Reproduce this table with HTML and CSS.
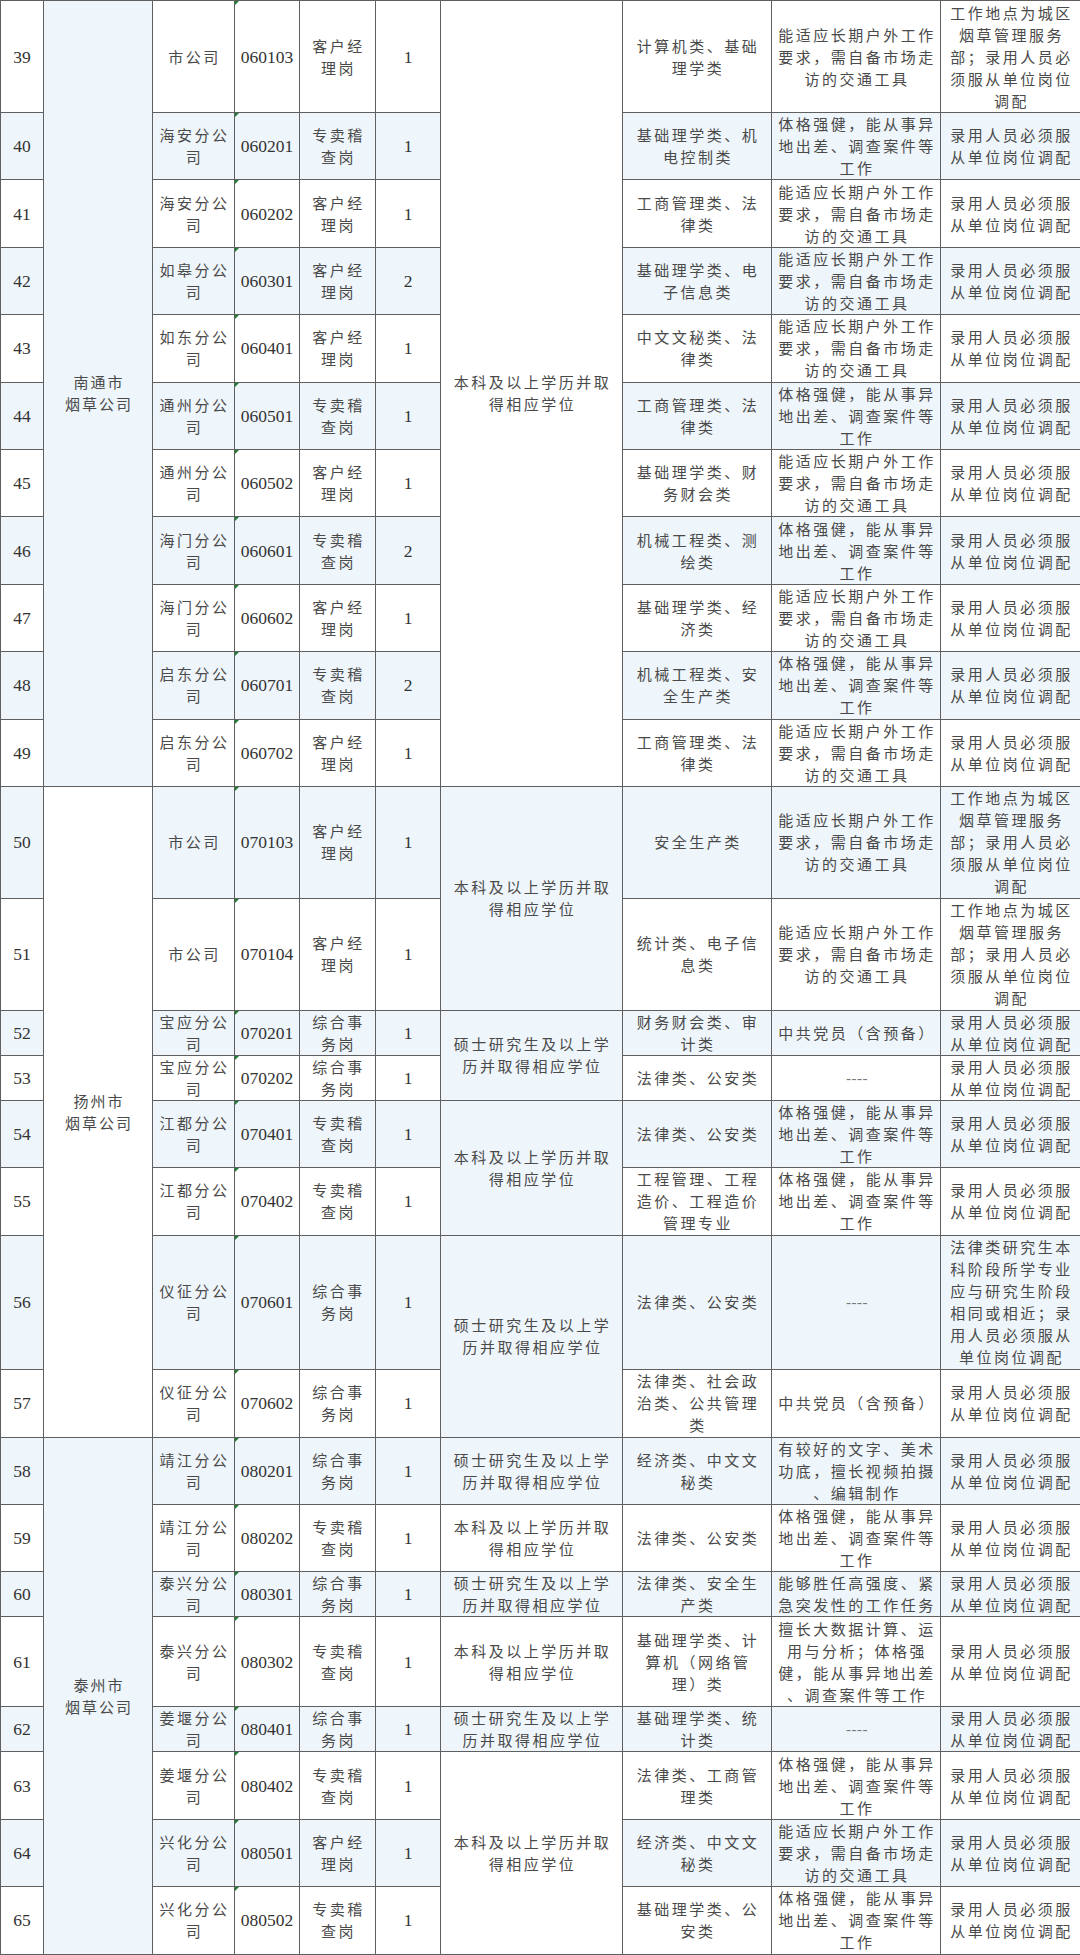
FILE: index.html
```html
<!DOCTYPE html>
<html lang="zh-CN">
<head>
<meta charset="utf-8">
<title>招聘岗位表</title>
<link rel="stylesheet" href="styles.css">
</head>
<body>
<table class="sheet">
  <colgroup>
    <col class="c-no"><col class="c-unit"><col class="c-dept"><col class="c-code"><col class="c-post">
    <col class="c-count"><col class="c-edu"><col class="c-major"><col class="c-req"><col class="c-note">
  </colgroup>
  <tbody>
    <tr class="h5">
      <td class="num">39</td>
      <td class="unit bg-blue" rowspan="11">南通市<br>烟草公司</td>
      <td>市公司</td><td class="num code">060103</td><td>客户经<br>理岗</td><td class="num">1</td>
      <td class="bg-white" rowspan="11">本科及以上学历并取<br>得相应学位</td>
      <td>计算机类、基础<br>理学类</td>
      <td>能适应长期户外工作<br>要求，需自备市场走<br>访的交通工具</td>
      <td>工作地点为城区<br>烟草管理服务<br>部；录用人员必<br>须服从单位岗位<br>调配</td>
    </tr>
    <tr class="h3 blue">
      <td class="num">40</td><td>海安分公<br>司</td><td class="num code">060201</td><td>专卖稽<br>查岗</td><td class="num">1</td>
      <td>基础理学类、机<br>电控制类</td>
      <td>体格强健，能从事异<br>地出差、调查案件等<br>工作</td>
      <td>录用人员必须服<br>从单位岗位调配</td>
    </tr>
    <tr class="h3">
      <td class="num">41</td><td>海安分公<br>司</td><td class="num code">060202</td><td>客户经<br>理岗</td><td class="num">1</td>
      <td>工商管理类、法<br>律类</td>
      <td>能适应长期户外工作<br>要求，需自备市场走<br>访的交通工具</td>
      <td>录用人员必须服<br>从单位岗位调配</td>
    </tr>
    <tr class="h3 blue">
      <td class="num">42</td><td>如皋分公<br>司</td><td class="num code">060301</td><td>客户经<br>理岗</td><td class="num">2</td>
      <td>基础理学类、电<br>子信息类</td>
      <td>能适应长期户外工作<br>要求，需自备市场走<br>访的交通工具</td>
      <td>录用人员必须服<br>从单位岗位调配</td>
    </tr>
    <tr class="h3">
      <td class="num">43</td><td>如东分公<br>司</td><td class="num code">060401</td><td>客户经<br>理岗</td><td class="num">1</td>
      <td>中文文秘类、法<br>律类</td>
      <td>能适应长期户外工作<br>要求，需自备市场走<br>访的交通工具</td>
      <td>录用人员必须服<br>从单位岗位调配</td>
    </tr>
    <tr class="h3 blue">
      <td class="num">44</td><td>通州分公<br>司</td><td class="num code">060501</td><td>专卖稽<br>查岗</td><td class="num">1</td>
      <td>工商管理类、法<br>律类</td>
      <td>体格强健，能从事异<br>地出差、调查案件等<br>工作</td>
      <td>录用人员必须服<br>从单位岗位调配</td>
    </tr>
    <tr class="h3">
      <td class="num">45</td><td>通州分公<br>司</td><td class="num code">060502</td><td>客户经<br>理岗</td><td class="num">1</td>
      <td>基础理学类、财<br>务财会类</td>
      <td>能适应长期户外工作<br>要求，需自备市场走<br>访的交通工具</td>
      <td>录用人员必须服<br>从单位岗位调配</td>
    </tr>
    <tr class="h3 blue">
      <td class="num">46</td><td>海门分公<br>司</td><td class="num code">060601</td><td>专卖稽<br>查岗</td><td class="num">2</td>
      <td>机械工程类、测<br>绘类</td>
      <td>体格强健，能从事异<br>地出差、调查案件等<br>工作</td>
      <td>录用人员必须服<br>从单位岗位调配</td>
    </tr>
    <tr class="h3">
      <td class="num">47</td><td>海门分公<br>司</td><td class="num code">060602</td><td>客户经<br>理岗</td><td class="num">1</td>
      <td>基础理学类、经<br>济类</td>
      <td>能适应长期户外工作<br>要求，需自备市场走<br>访的交通工具</td>
      <td>录用人员必须服<br>从单位岗位调配</td>
    </tr>
    <tr class="h3 blue">
      <td class="num">48</td><td>启东分公<br>司</td><td class="num code">060701</td><td>专卖稽<br>查岗</td><td class="num">2</td>
      <td>机械工程类、安<br>全生产类</td>
      <td>体格强健，能从事异<br>地出差、调查案件等<br>工作</td>
      <td>录用人员必须服<br>从单位岗位调配</td>
    </tr>
    <tr class="h3">
      <td class="num">49</td><td>启东分公<br>司</td><td class="num code">060702</td><td>客户经<br>理岗</td><td class="num">1</td>
      <td>工商管理类、法<br>律类</td>
      <td>能适应长期户外工作<br>要求，需自备市场走<br>访的交通工具</td>
      <td>录用人员必须服<br>从单位岗位调配</td>
    </tr>

    <tr class="h5 blue">
      <td class="num">50</td>
      <td class="unit bg-white" rowspan="8">扬州市<br>烟草公司</td>
      <td>市公司</td><td class="num code">070103</td><td>客户经<br>理岗</td><td class="num">1</td>
      <td class="bg-blue" rowspan="2">本科及以上学历并取<br>得相应学位</td>
      <td>安全生产类</td>
      <td>能适应长期户外工作<br>要求，需自备市场走<br>访的交通工具</td>
      <td>工作地点为城区<br>烟草管理服务<br>部；录用人员必<br>须服从单位岗位<br>调配</td>
    </tr>
    <tr class="h5">
      <td class="num">51</td><td>市公司</td><td class="num code">070104</td><td>客户经<br>理岗</td><td class="num">1</td>
      <td>统计类、电子信<br>息类</td>
      <td>能适应长期户外工作<br>要求，需自备市场走<br>访的交通工具</td>
      <td>工作地点为城区<br>烟草管理服务<br>部；录用人员必<br>须服从单位岗位<br>调配</td>
    </tr>
    <tr class="h2 blue">
      <td class="num">52</td><td>宝应分公<br>司</td><td class="num code">070201</td><td>综合事<br>务岗</td><td class="num">1</td>
      <td class="bg-blue" rowspan="2">硕士研究生及以上学<br>历并取得相应学位</td>
      <td>财务财会类、审<br>计类</td>
      <td>中共党员（含预备）</td>
      <td>录用人员必须服<br>从单位岗位调配</td>
    </tr>
    <tr class="h2">
      <td class="num">53</td><td>宝应分公<br>司</td><td class="num code">070202</td><td>综合事<br>务岗</td><td class="num">1</td>
      <td>法律类、公安类</td>
      <td class="dash">----</td>
      <td>录用人员必须服<br>从单位岗位调配</td>
    </tr>
    <tr class="h3 blue">
      <td class="num">54</td><td>江都分公<br>司</td><td class="num code">070401</td><td>专卖稽<br>查岗</td><td class="num">1</td>
      <td class="bg-blue" rowspan="2">本科及以上学历并取<br>得相应学位</td>
      <td>法律类、公安类</td>
      <td>体格强健，能从事异<br>地出差、调查案件等<br>工作</td>
      <td>录用人员必须服<br>从单位岗位调配</td>
    </tr>
    <tr class="h3">
      <td class="num">55</td><td>江都分公<br>司</td><td class="num code">070402</td><td>专卖稽<br>查岗</td><td class="num">1</td>
      <td>工程管理、工程<br>造价、工程造价<br>管理专业</td>
      <td>体格强健，能从事异<br>地出差、调查案件等<br>工作</td>
      <td>录用人员必须服<br>从单位岗位调配</td>
    </tr>
    <tr class="h6 blue">
      <td class="num">56</td><td>仪征分公<br>司</td><td class="num code">070601</td><td>综合事<br>务岗</td><td class="num">1</td>
      <td class="bg-blue" rowspan="2">硕士研究生及以上学<br>历并取得相应学位</td>
      <td>法律类、公安类</td>
      <td class="dash">----</td>
      <td>法律类研究生本<br>科阶段所学专业<br>应与研究生阶段<br>相同或相近；录<br>用人员必须服从<br>单位岗位调配</td>
    </tr>
    <tr class="h3">
      <td class="num">57</td><td>仪征分公<br>司</td><td class="num code">070602</td><td>综合事<br>务岗</td><td class="num">1</td>
      <td>法律类、社会政<br>治类、公共管理<br>类</td>
      <td>中共党员（含预备）</td>
      <td>录用人员必须服<br>从单位岗位调配</td>
    </tr>

    <tr class="h3 blue">
      <td class="num">58</td>
      <td class="unit bg-blue" rowspan="8">泰州市<br>烟草公司</td>
      <td>靖江分公<br>司</td><td class="num code">080201</td><td>综合事<br>务岗</td><td class="num">1</td>
      <td>硕士研究生及以上学<br>历并取得相应学位</td>
      <td>经济类、中文文<br>秘类</td>
      <td>有较好的文字、美术<br>功底，擅长视频拍摄<br>、编辑制作</td>
      <td>录用人员必须服<br>从单位岗位调配</td>
    </tr>
    <tr class="h3">
      <td class="num">59</td><td>靖江分公<br>司</td><td class="num code">080202</td><td>专卖稽<br>查岗</td><td class="num">1</td>
      <td>本科及以上学历并取<br>得相应学位</td>
      <td>法律类、公安类</td>
      <td>体格强健，能从事异<br>地出差、调查案件等<br>工作</td>
      <td>录用人员必须服<br>从单位岗位调配</td>
    </tr>
    <tr class="h2 blue">
      <td class="num">60</td><td>泰兴分公<br>司</td><td class="num code">080301</td><td>综合事<br>务岗</td><td class="num">1</td>
      <td>硕士研究生及以上学<br>历并取得相应学位</td>
      <td>法律类、安全生<br>产类</td>
      <td>能够胜任高强度、紧<br>急突发性的工作任务</td>
      <td>录用人员必须服<br>从单位岗位调配</td>
    </tr>
    <tr class="h4">
      <td class="num">61</td><td>泰兴分公<br>司</td><td class="num code">080302</td><td>专卖稽<br>查岗</td><td class="num">1</td>
      <td>本科及以上学历并取<br>得相应学位</td>
      <td>基础理学类、计<br>算机（网络管<br>理）类</td>
      <td>擅长大数据计算、运<br>用与分析；体格强<br>健，能从事异地出差<br>、调查案件等工作</td>
      <td>录用人员必须服<br>从单位岗位调配</td>
    </tr>
    <tr class="h2 blue">
      <td class="num">62</td><td>姜堰分公<br>司</td><td class="num code">080401</td><td>综合事<br>务岗</td><td class="num">1</td>
      <td>硕士研究生及以上学<br>历并取得相应学位</td>
      <td>基础理学类、统<br>计类</td>
      <td class="dash">----</td>
      <td>录用人员必须服<br>从单位岗位调配</td>
    </tr>
    <tr class="h3">
      <td class="num">63</td><td>姜堰分公<br>司</td><td class="num code">080402</td><td>专卖稽<br>查岗</td><td class="num">1</td>
      <td class="bg-white" rowspan="3">本科及以上学历并取<br>得相应学位</td>
      <td>法律类、工商管<br>理类</td>
      <td>体格强健，能从事异<br>地出差、调查案件等<br>工作</td>
      <td>录用人员必须服<br>从单位岗位调配</td>
    </tr>
    <tr class="h3 blue">
      <td class="num">64</td><td>兴化分公<br>司</td><td class="num code">080501</td><td>客户经<br>理岗</td><td class="num">1</td>
      <td>经济类、中文文<br>秘类</td>
      <td>能适应长期户外工作<br>要求，需自备市场走<br>访的交通工具</td>
      <td>录用人员必须服<br>从单位岗位调配</td>
    </tr>
    <tr class="h3">
      <td class="num">65</td><td>兴化分公<br>司</td><td class="num code">080502</td><td>专卖稽<br>查岗</td><td class="num">1</td>
      <td>基础理学类、公<br>安类</td>
      <td>体格强健，能从事异<br>地出差、调查案件等<br>工作</td>
      <td>录用人员必须服<br>从单位岗位调配</td>
    </tr>
  </tbody>
</table>
</body>
</html>
```

FILE: styles.css
```css
html, body {
  margin: 0;
  padding: 0;
  background: #ffffff;
}

body {
  font-family: "Noto Sans CJK SC", "Noto Sans", sans-serif;
  color: #4a4a4a;
}

.sheet {
  width: 1080px;
  border-collapse: collapse;
  table-layout: fixed;
}

.c-no { width: 43px; }
.c-unit { width: 109px; }
.c-dept { width: 82px; }
.c-code { width: 65px; }
.c-post { width: 76px; }
.c-count { width: 65px; }
.c-edu { width: 182px; }
.c-major { width: 149px; }
.c-req { width: 169px; }
.c-note { width: 140px; }

.sheet td {
  border: 1px solid #5f5f5f;
  padding: 0 0 0 2px;
  text-align: center;
  vertical-align: middle;
  font-size: 15px;
  font-weight: 400;
  line-height: 22px;
  letter-spacing: 2.5px;
  white-space: nowrap;
  overflow: hidden;
}

.h2 { height: 45px; }
.h3 { height: 67.4px; }
.h4 { height: 90px; }
.h5 { height: 112px; }
.h6 { height: 134.5px; }

.blue { background: #eef5fb; }
.bg-blue { background: #eef5fb; }
.bg-white { background: #ffffff; }

.sheet td.num {
  font-family: "Liberation Serif", "Times New Roman", serif;
  font-size: 17.5px;
  letter-spacing: 0;
  padding: 0;
  color: #333333;
}

.sheet td.code {
  position: relative;
}

.sheet td.code::before {
  content: "";
  position: absolute;
  left: 0;
  top: 0;
  border-top: 4px solid #1e7d32;
  border-right: 4px solid transparent;
}

.sheet td.unit {
  letter-spacing: 2px;
}

.sheet td.dash {
  font-family: "Liberation Serif", serif;
  font-size: 15px;
  letter-spacing: 0.5px;
  color: #777777;
}
```
